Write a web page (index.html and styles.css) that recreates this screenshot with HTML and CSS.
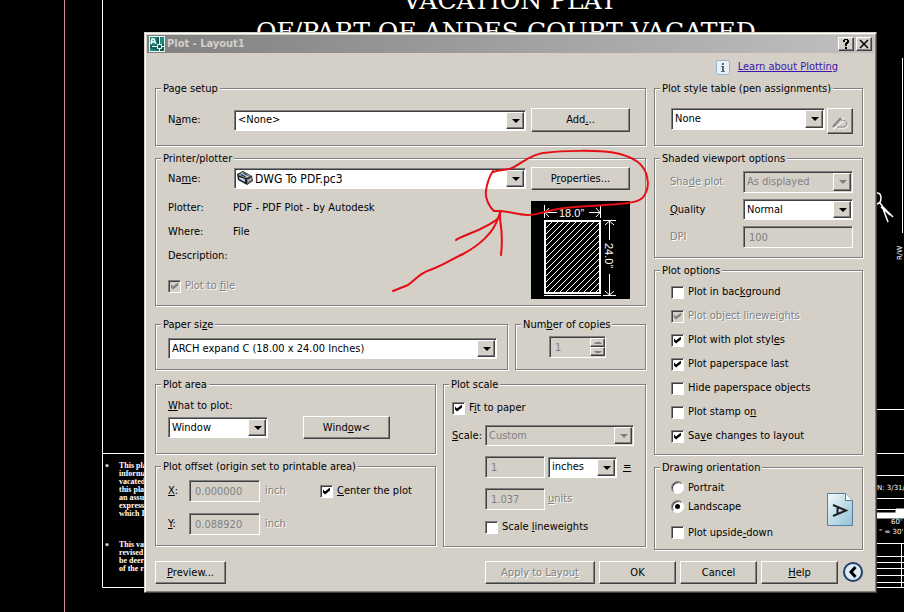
FILE: index.html
```html
<!DOCTYPE html>
<html lang="en">
<head>
  <meta charset="UTF-8">
  <title>Plot - Layout1</title>
  <meta name="viewport" content="width=device-width,initial-scale=1">
  <link rel="stylesheet" href="styles.css">
</head>
<body>

  <!-- drawing sheet behind the dialog -->
  <svg class="sheet" viewBox="0 0 904 612" preserveAspectRatio="xMinYMin slice">
    <path d="M64.500 0V612" stroke="#d9849a"/>
    <path d="M102.500 0V587.500H150M102 453.500H150M902.500 58V233M870 409.500H904M870 453.500H904M870 475.500H904M870 498.500H904M870 543.500H904M901.500 543V587M870 556.500H904M870 562.500H904M870 568.500H904M870 575.500H904M870 582.500H904M870 587.500H904" stroke="#fff" fill="none"/>
    <path d="M870 509.500H904M870 513H897V518H870ZM896 509H904V518H896Z" fill="#fff" stroke="#fff"/>
    <path d="M877 193q4 0 4 5t-4 6M880 203l3 4 10 10M882 206l6 16M881 207l9 8" stroke="#fff" stroke-width="1.500" fill="none"/>
    <g class="sheet-title">
      <text x="403" y="9">VACATION PLAT</text>
      <text x="256" y="40">OF/PART OF ANDES COURT VACATED</text>
    </g>
    <g class="sheet-note">
      <text x="105" y="470">*</text>
      <text x="119" y="468">This pla</text>
      <text x="119" y="476">informa</text>
      <text x="119" y="484">vacated</text>
      <text x="119" y="492">this plat</text>
      <text x="119" y="500">an assu</text>
      <text x="119" y="508">express</text>
      <text x="119" y="516">which I</text>
      <text x="105" y="549">*</text>
      <text x="119" y="547">This vac</text>
      <text x="119" y="555">revised</text>
      <text x="119" y="563">be deer</text>
      <text x="119" y="571">of the ro</text>
    </g>
    <g class="sheet-label">
      <text x="877" y="490">N: 3/31/1</text>
      <text x="891" y="524">60'</text>
      <text x="879" y="534">" = 30'</text>
      <text transform="translate(902 260) rotate(-90)">R/W</text>
    </g>
  </svg>

  <form class="dialog">
    <header class="titlebar">
      <svg class="app-icon" viewBox="0 0 16 16">
        <path d="M0 0H16V16H0Z" fill="#e8f4f0"/>
        <path d="M1 1H15V15H1Z" fill="#1f8a7c"/>
        <path d="M8 1H10V8H15V15H12L1 12V10L6 9Z" fill="#0f5a55"/>
        <path d="M2 8L3 3H5L7 8M3 6H6" stroke="#fff" stroke-width="1.500" fill="none"/>
        <path d="M10.500 1V15M3 10.500H15" stroke="#fff" stroke-width="1"/>
        <path d="M8.500 8.500H12.500V12.500H8.500Z" fill="#0f5a55" stroke="#fff"/>
      </svg>
      <h1>Plot - Layout1</h1>
      <button type="button" class="tool" aria-label="Help"><svg viewBox="0 0 12 10"><path d="M3 1H4V0H8V1H9V4H8V5H7V7H5V4H6V3H7V1H5V3H3ZM5 8H7V10H5Z"/></svg></button>
      <button type="button" class="tool" aria-label="Close"><svg viewBox="0 0 12 10"><path d="M2 1L10 9M10 1L2 9" stroke="#000" stroke-width="1.500"/></svg></button>
    </header>

    <div class="content">
      <div class="learn">
        <svg class="info" viewBox="0 0 14 15">
          <rect x="0.500" y="0.500" width="13" height="14" rx="2" fill="#e6f1f8" stroke="#8fb4cc"/>
          <path d="M6 3H8V5H6ZM5 6H8V11H9V12H5V11H6V7H5Z" fill="#5b6a75"/>
        </svg>
        <a href="#">Learn about Plotting</a>
      </div>

      <div class="columns">
        <div class="main">
          <fieldset class="page-setup">
            <legend>Page setup</legend>
            <div class="field-row">
              <label for="setup">N<u>a</u>me:</label>
              <span class="combo"><select id="setup"><option>&lt;None&gt;</option></select></span>
              <button type="button">Add<u>.</u>..</button>
            </div>
          </fieldset>

          <fieldset class="printer">
            <legend>Printer/plotter</legend>
            <div class="field-row">
              <label for="printer">Na<u>m</u>e:</label>
              <span class="combo with-icon">
                <select id="printer"><option>DWG To PDF.pc3</option></select>
                <svg viewBox="0 0 16 14">
                  <path d="M0 3L6 0L15 5L16 10L10 14L1 9Z" fill="#222"/>
                  <path d="M1 4L6 1L14 5L9 7Z" fill="#a8a898"/>
                  <path d="M3 4L7 2L11 4L8 6Z" fill="#1c3f7a"/>
                  <path d="M2 6L8 8V11L2 8Z" fill="#8fa8d8"/>
                  <path d="M10 8L15 6V10L10 13Z" fill="#777"/>
                  <path d="M3 7L7 10M5 7L8 10M11 10L14 8M4 2L11 6" stroke="#dde" stroke-width="1"/>
                </svg>
              </span>
              <button type="button">P<u>r</u>operties...</button>
            </div>
            <div class="printer-info">
              <div>
                <dl>
                  <dt>Plotter:</dt><dd>PDF - PDF Plot - by Autodesk</dd>
                  <dt>Where:</dt><dd>File</dd>
                  <dt>Description:</dt><dd></dd>
                </dl>
                <label class="check off"><input type="checkbox" checked disabled><span>Plot to <u>f</u>ile</span></label>
              </div>
              <svg class="preview" viewBox="0 0 99 98">
                <defs>
                  <pattern id="hatch" width="6" height="6" patternUnits="userSpaceOnUse">
                    <path d="M-1 1L1 -1M0 6L6 0M5 7L7 5" stroke="#fff"/>
                  </pattern>
                </defs>
                <path d="M0 0H99V98H0Z"/>
                <path d="M14 20H69V92H14Z" fill="url(#hatch)" stroke="#fff" stroke-width="2"/>
                <path d="M13 94.500H70M13.500 4V17M69.500 4V17M14 11.500H26M58 11.500H69M18 7L14 11.500L18 16M65 7L69 11.500L65 16M72 19.500H85M72 94.500H85M78.500 20V39M78.500 73V94M74 24L78.500 20L83 24M74 90L78.500 94L83 90" stroke="#fff" fill="none"/>
                <text x="28" y="16">18.0”</text>
                <text transform="translate(74 42) rotate(90)">24.0”</text>
              </svg>
            </div>
          </fieldset>

          <div class="paper-row">
            <fieldset class="paper">
              <legend>Paper si<u>z</u>e</legend>
              <span class="combo"><select aria-label="Paper size"><option>ARCH expand C (18.00 x 24.00 Inches)</option></select></span>
            </fieldset>
            <fieldset class="copies">
              <legend>Num<u>b</u>er of copies</legend>
              <div class="spinner">
                <input type="text" value="1" aria-label="Number of copies" disabled>
                <span class="spin-buttons">
                  <button type="button" class="up" aria-label="More" disabled></button>
                  <button type="button" class="down" aria-label="Fewer" disabled></button>
                </span>
              </div>
            </fieldset>
          </div>

          <div class="area-row">
            <div class="area-col">
              <fieldset class="plot-area">
                <legend>Plot area</legend>
                <label for="what"><u>W</u>hat to plot:</label>
                <div class="what-row">
                  <span class="combo"><select id="what"><option>Window</option></select></span>
                  <button type="button">Wind<u>o</u>w&lt;</button>
                </div>
              </fieldset>
              <fieldset class="offset">
                <legend>Plot offset (origin set to printable area)</legend>
                <label for="off-x"><u>X</u>:</label>
                <input type="text" id="off-x" value="0.000000" disabled>
                <span class="off">inch</span>
                <label class="check"><input type="checkbox" checked><span><u>C</u>enter the plot</span></label>
                <label for="off-y"><u>Y</u>:</label>
                <input type="text" id="off-y" value="0.088920" disabled>
                <span class="off">inch</span>
              </fieldset>
            </div>
            <fieldset class="scale">
              <legend>Plot scale</legend>
              <label class="check"><input type="checkbox" checked><span>F<u>i</u>t to paper</span></label>
              <div class="scale-grid">
                <label for="scale"><u>S</u>cale:</label>
                <span class="combo wide"><select id="scale" disabled><option>Custom</option></select></span>
                <input type="text" class="first" value="1" aria-label="Paper units" disabled>
                <div class="unit-pick">
                  <span class="combo"><select aria-label="Unit"><option>inches</option></select></span>
                  <u>=</u>
                </div>
                <input type="text" class="first" id="units" value="1.037" disabled>
                <label for="units" class="off"><u>u</u>nits</label>
                <label class="check wide"><input type="checkbox"><span>Scale <u>l</u>ineweights</span></label>
              </div>
            </fieldset>
          </div>
        </div>

        <div class="side">
          <fieldset class="styles">
            <legend>Plot style table (pen assignments)</legend>
            <span class="combo tall"><select aria-label="Plot style table"><option>None</option></select></span>
            <button type="button" aria-label="Edit" disabled><svg viewBox="0 0 18 16"><path d="M2 13L9 4L11 3L12 5L5 12L1 14ZM10 6Q16 6 16 10Q15 14 9 13H6" fill="none" stroke="#fff" transform="translate(1 1)"/><path d="M10 6Q16 6 16 10Q15 14 9 13H6" fill="none" stroke="#808080"/><path d="M2 13L10 4" stroke="#808080" stroke-width="2"/></svg></button>
          </fieldset>

          <fieldset class="shaded">
            <legend>Shaded viewport options</legend>
            <label for="shade" class="off">Sha<u>d</u>e plot</label>
            <span class="combo tall"><select id="shade" disabled><option>As displayed</option></select></span>
            <label for="quality"><u>Q</u>uality</label>
            <span class="combo"><select id="quality"><option>Normal</option></select></span>
            <label for="dpi" class="off">DPI</label>
            <input type="text" id="dpi" value="100" disabled>
          </fieldset>

          <fieldset class="options">
            <legend>Plot options</legend>
            <label class="check"><input type="checkbox"><span>Plot in bac<u>k</u>ground</span></label>
            <label class="check off"><input type="checkbox" checked disabled><span>Plot object lineweights</span></label>
            <label class="check"><input type="checkbox" checked><span>Plot with plot styl<u>e</u>s</span></label>
            <label class="check"><input type="checkbox" checked><span>Plot paperspace last</span></label>
            <label class="check"><input type="checkbox"><span>Hide paperspace ob<u>j</u>ects</span></label>
            <label class="check"><input type="checkbox"><span>Plot stamp o<u>n</u></span></label>
            <label class="check"><input type="checkbox" checked><span>Sa<u>v</u>e changes to layout</span></label>
          </fieldset>

          <fieldset class="orientation">
            <legend>Drawing orientation</legend>
            <div>
              <label class="check"><input type="radio" name="orient">Portrait</label>
              <label class="check"><input type="radio" name="orient" checked>Landscape</label>
              <label class="check"><input type="checkbox"><span>Plot upside<u>-</u>down</span></label>
            </div>
            <svg class="page-icon" viewBox="0 0 26 33">
              <defs>
                <linearGradient id="paper" x1="0" y1="0" x2="1" y2="1"><stop offset="0" stop-color="#f4fafc"/><stop offset="1" stop-color="#8fc0d4"/></linearGradient>
              </defs>
              <path d="M0.500 0.500H18.500L25.500 7.500V32.500H0.500Z" fill="url(#paper)" stroke="#557f98"/>
              <path d="M18.500 0.500V7.500H25.500" fill="#fff" stroke="#557f98"/>
              <path d="M6 12L19 17.500L6 23M10.500 14V21" fill="none" stroke="#222" stroke-width="2"/>
            </svg>
          </fieldset>
        </div>
      </div>

      <footer>
        <button type="button" class="preview-btn"><u>P</u>review...</button>
        <button type="button" class="apply" disabled>Apply to Layou<u>t</u></button>
        <button type="button">OK</button>
        <button type="button">Cancel</button>
        <button type="button"><u>H</u>elp</button>
        <button type="button" class="less" aria-label="Less options"><svg viewBox="0 0 20 20"><circle cx="10" cy="10" r="9" fill="#dcebf6" stroke="#1f3f66" stroke-width="2"/><path d="M12.500 5L8 10L12.500 15" fill="none" stroke="#000" stroke-width="3"/></svg></button>
      </footer>
    </div>
  </form>

  <!-- hand-drawn markup -->
  <svg class="markup" viewBox="0 0 904 612" preserveAspectRatio="xMinYMin slice">
    <path d="M493 172C500 169 506 171 512 168C522 163 530 155 543 153C560 151 600 149 620 154C634 158 642 163 646 173C649 182 648 190 644 196C640 202 630 203 618 204C600 206 575 206 558 209C545 211 538 215 527 215C515 214 505 210 494 211C488 206 485 196 486 191C487 183 489 177 493 171"/>
    <path d="M393 291L408 285C416 279 420 273 430 270C444 265 450 260 463 254C480 245 494 232 498 218L501 211"/>
    <path d="M456 240C462 235 486 230 500 217"/>
    <path d="M500 212C499 225 504 228 501 255"/>
  </svg>

</body>
</html>
```

FILE: styles.css
```css
* { box-sizing: border-box; }
body { margin: 0; min-height: 100vh; background: #000; color: #000; font: 11px/14px "DejaVu Sans Condensed", "DejaVu Sans", sans-serif; font-stretch: condensed; }

/* drawing */
.sheet, .markup { position: absolute; left: 0; top: 0; width: 100%; height: 100%; overflow: hidden; }
.sheet text { fill: #fff; }
.sheet-title { font: 25px "DejaVu Serif", serif; }
.sheet-note { font: bold 8px "Liberation Serif", serif; }
.sheet-label { font: 7px "DejaVu Sans", sans-serif; }
.markup { pointer-events: none; fill: none; stroke: #e60d14; stroke-width: 2; stroke-linecap: round; }

/* window */
.dialog { position: absolute; left: 144px; right: 27px; top: 32px; padding: 1px; background: #d4d0c8; border: 1px solid; border-color: #d4d0c8 #404040 #404040 #d4d0c8; box-shadow: inset 1px 1px #fff, inset -1px -1px #808080; }
.titlebar { display: flex; align-items: center; gap: 2px; height: 18px; margin: 1px; padding: 0 2px; background: linear-gradient(to right, #808080, #c0c0c0); }
.titlebar h1 { flex: 1; margin: 0; font-size: 11px; color: #d4d0c8; }
.app-icon { width: 16px; height: 16px; }
.tool { width: 16px; height: 14px; padding: 0 1px; }
.tool svg { display: block; width: 12px; height: 10px; }
.content { padding: 0 12px 7px 9px; }
.learn { display: flex; align-items: center; justify-content: flex-end; gap: 8px; height: 26px; padding-right: 25px; }
.learn a { color: #3c14a8; }
.info { width: 14px; height: 15px; }

.columns { display: grid; grid-template-columns: 1fr 209px; gap: 8px; }
.main, .side, .area-col { display: flex; flex-direction: column; gap: 4px; }

/* group boxes; --pad is the left padding, which the legend steps out of */
fieldset { --pad: 12px; min-width: 0; margin: 0; padding: 0 0 0 var(--pad); border: 1px solid #808080; box-shadow: inset 1px 1px #fff, 1px 1px #fff; }
legend { margin-left: calc(5px - var(--pad)); padding: 2px 2px 0; background: #d4d0c8; white-space: nowrap; }

/* controls */
button, select, input { font: inherit; color: #000; margin: 0; border-radius: 0; }
button { height: 23px; padding: 0; background: #d4d0c8; border: 1px solid; border-color: #fff #404040 #404040 #fff; box-shadow: inset -1px -1px #808080; }
button:disabled, .off { color: #808080; text-shadow: 1px 1px #fff; }
select, input[type=text] { appearance: none; display: block; width: 100%; height: 21px; padding: 0 3px; background: #fff; border: 1px solid; border-color: #808080 #fff #fff #808080; box-shadow: inset 1px 1px #404040; opacity: 1; }
input[type=text] { height: 22px; padding: 0 5px; }
select:disabled, input:disabled { background: #d4d0c8; color: #808080; }
.combo { position: relative; display: block; }
.combo::after { content: ""; position: absolute; right: 2px; top: 2px; bottom: 2px; width: 16px; background: #d4d0c8; border: 1px solid; border-color: #fff #404040 #404040 #fff; box-shadow: inset -1px -1px #808080; pointer-events: none; }
.combo::before { content: ""; position: absolute; z-index: 1; right: 6px; top: 9px; border: 4px solid transparent; border-top-color: #000; border-bottom: 0; pointer-events: none; }
.combo:has(:disabled)::before { border-top-color: #808080; }
.combo.tall select { height: 22px; }
.with-icon select { padding-left: 20px; font-size: 12px; }
.with-icon svg { position: absolute; left: 3px; top: 3px; width: 16px; height: 14px; }
.check { display: flex; align-items: center; gap: 4px; }
.check input { appearance: none; flex: none; width: 13px; height: 13px; padding: 2px; background: #fff; border: 1px solid; border-color: #808080 #fff #fff #808080; box-shadow: inset 1px 1px #404040; }
.check input:disabled { background: #d4d0c8; }
.check input:checked::before { content: ""; display: block; width: 7px; height: 7px; background: #000; clip-path: polygon(0 2px, 2px 4px, 7px 0, 7px 3px, 2px 7px, 0 5px); }
.check input:disabled::before { background: #808080; }
.check input[type=radio] { border-radius: 50%; }
.check input[type=radio]:checked::before { width: 5px; height: 5px; margin: 1px; border-radius: 50%; clip-path: none; }

/* left side */
.field-row { display: grid; grid-template-columns: 66px 1fr 99px; align-items: center; }
.field-row .combo { margin-right: 5px; }
.page-setup { padding: 12px 15px 13px var(--pad); }
.page-setup button { height: 24px; }
.printer { padding: 1px 15px 6px var(--pad); }
.printer-info { display: flex; justify-content: space-between; padding-top: 6px; }
dl { display: grid; grid-template-columns: 65px auto; margin: 0 0 11px; line-height: 24px; }
dd { margin: 0; }
.preview { width: 99px; height: 98px; margin-top: 5px; }
.preview text { font: 11px "Liberation Sans", sans-serif; fill: #fff; }

.paper-row { display: grid; grid-template-columns: 1fr 131px; gap: 7px; margin-top: 6px; }
.paper { padding: 6px 10px 10px var(--pad); }
.copies { --pad: 33px; padding: 4px 39px 0 var(--pad); }
.spinner { position: relative; }
.spin-buttons { position: absolute; top: 2px; right: 1px; display: flex; flex-direction: column; width: 15px; }
.spin-buttons button { height: 9px; }
.spin-buttons button::before { content: ""; display: block; width: 4px; margin: 0 auto; border: 2px solid transparent; }
.spin-buttons .up::before { border-top: 0; border-bottom-color: #808080; }
.spin-buttons .down::before { border-bottom: 0; border-top-color: #808080; }

.area-row { display: grid; grid-template-columns: 1fr 203px; gap: 7px; margin-top: 2px; }
.plot-area { padding: 7px 12px 14px var(--pad); }
.plot-area label { display: block; margin-bottom: 3px; }
.what-row { display: grid; grid-template-columns: 100px 87px; gap: 35px; align-items: center; }
.offset { display: grid; grid-template-columns: 16px 71px 50px 1fr; gap: 11px 5px; align-items: center; padding: 6px 0 10px var(--pad); }
.scale { --pad: 8px; padding: 9px 11px 12px var(--pad); }
.scale-grid { display: grid; grid-template-columns: 30px 60px 1fr; gap: 10px 3px; align-items: center; margin-top: 10px; }
.scale .check { height: 14px; }
.wide { grid-column: 2 / -1; }
.first { grid-column: 2; }
.unit-pick { display: flex; gap: 6px; align-items: center; }
.unit-pick .combo { width: 69px; }

/* right side */
.styles { --pad: 16px; display: grid; grid-template-columns: 1fr 26px; gap: 2px; align-items: start; padding: 12px 9px 11px var(--pad); }
.styles button { height: 26px; }
.styles button svg { display: block; width: 18px; height: 16px; margin: 2px auto 0; }
.shaded { --pad: 15px; display: grid; grid-template-columns: 73px 1fr; gap: 6px 0; align-items: center; padding: 5px 9px 9px var(--pad); }
.options { --pad: 16px; padding: 2px 0 6px var(--pad); }
.options .check { height: 24px; }
.orientation { --pad: 16px; display: flex; justify-content: space-between; padding: 3px 9px 7px var(--pad); }
.orientation div { display: flex; flex-direction: column; }
.orientation .check { height: 19px; }
.orientation .check:last-child { margin-top: 7px; }
.page-icon { width: 26px; height: 33px; margin-top: 15px; }

footer { display: flex; gap: 4px; margin-top: 11px; }
footer button { width: 77px; }
.preview-btn { width: 71px; margin-right: auto; }
.apply { width: 110px; }
.less { width: 20px; height: 20px; margin: 1px 0 0 1px; background: none; border: 0; box-shadow: none; }
.less svg { display: block; width: 20px; height: 20px; }
```
